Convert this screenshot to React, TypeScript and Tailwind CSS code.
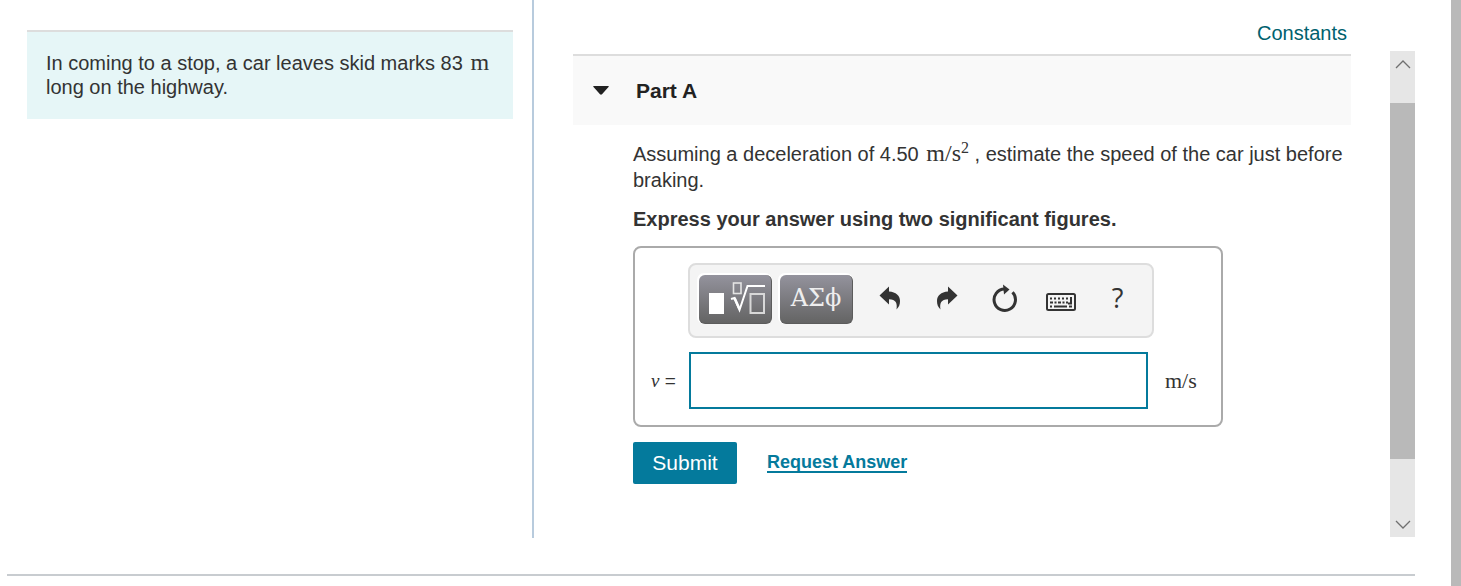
import type { ReactNode } from "react";

function ToolButton({ label, children }: { label: string; children: ReactNode }) {
  return (
    <button
      type="button"
      aria-label={label}
      className="flex h-[46px] w-[57px] items-center justify-center text-[#333333]"
    >
      {children}
    </button>
  );
}

function TemplateButton({ label, children }: { label: string; children: ReactNode }) {
  return (
    <button
      type="button"
      aria-label={label}
      className="flex h-[49px] w-[73px] items-center justify-center rounded-md border-r border-b border-[#5c5c5c] bg-linear-to-b from-[#94939d] to-[#646464] text-white shadow-[-1px_-1px_0_1px_#ffffff]"
    >
      {children}
    </button>
  );
}

function Toolbar() {
  return (
    <div
      role="toolbar"
      aria-label="Equation tools"
      className="flex w-fit items-start gap-2 rounded-lg border-2 border-[#dddddd] bg-[#f4f4f4] pt-[10px] pr-[6px] pb-3 pl-[9px]"
    >
      <TemplateButton label="Templates">
        <svg width="60" height="36" viewBox="0 0 60 36" fill="none">
          <rect x="4" y="12" width="15" height="21" fill="#fff" />
          <rect x="28.500" y="2" width="7.500" height="10.500" stroke="#e4e4e4" strokeWidth="1.600" />
          <path d="M26 18L29.500 17L34.500 29L42.500 5H60" stroke="#fff" strokeWidth="2" />
          <path d="M29.500 17L34.500 28" stroke="#fff" strokeWidth="2.600" />
          <rect x="45.500" y="13" width="13.500" height="19" stroke="#d8d8d8" strokeWidth="2" />
        </svg>
      </TemplateButton>
      <TemplateButton label="Greek symbols">
        <span className="pb-[2px] font-['DejaVu_Serif',serif] text-[24px] leading-8 text-[#eeeeee]">ΑΣϕ</span>
      </TemplateButton>
      <div className="flex">
        <ToolButton label="Undo">
          <svg width="22" height="24" viewBox="0 0 22 24" fill="currentColor">
            <path d="M0.500 9.500L10 0.500V5.500C17 6 21 9.500 21 15C21 18.500 20 21 17.500 23.500C18.500 17 17 13.500 10 13.200V18.500Z" />
          </svg>
        </ToolButton>
        <ToolButton label="Redo">
          <svg width="22" height="24" viewBox="0 0 22 24" fill="currentColor">
            <path d="M21.500 9.500L12 0.500V5.500C5 6 1 9.500 1 15C1 18.500 2 21 4.500 23.500C3.500 17 5 13.500 12 13.200V18.500Z" />
          </svg>
        </ToolButton>
        <ToolButton label="Reset">
          <svg width="26" height="28" viewBox="0 0 26 28" fill="none">
            <path d="M21.500 8.300A10.700 10.700 0 1 1 13.500 5" stroke="currentColor" strokeWidth="3" />
            <path d="M12 0.500L18.500 5.500L13 10.500Z" fill="currentColor" />
          </svg>
        </ToolButton>
        <ToolButton label="Keyboard shortcuts">
          <svg className="mt-2" width="30" height="18" viewBox="0 0 30 18" fill="none" stroke="currentColor">
            <rect x="1" y="1" width="28" height="16" rx="1.500" strokeWidth="2" />
            <path d="M4 5.500H23" strokeWidth="2" strokeDasharray="2 2" />
            <path d="M4 9.500H22" strokeWidth="2" strokeDasharray="3 1.500 2 1.500" />
            <path d="M25 4V10.500H22" strokeWidth="2" />
            <path d="M4 13.500H6M8 13.500H21M23 13.500H26" strokeWidth="2" />
          </svg>
        </ToolButton>
        <ToolButton label="Help">
          <span className="font-['Open_Sans',sans-serif] text-[27px] leading-8">?</span>
        </ToolButton>
      </div>
    </div>
  );
}

function ScrollBar() {
  return (
    <div className="mt-[51px] mb-px flex w-[25px] shrink-0 flex-col bg-[#e6e6e6] text-[#707070]">
      <button type="button" aria-label="Scroll up" className="flex h-[26px] items-center justify-center">
        <svg width="16" height="9" viewBox="0 0 16 9" fill="none" stroke="currentColor" strokeWidth="1.300">
          <path d="M1 8L8 1L15 8" />
        </svg>
      </button>
      <div className="flex flex-1 flex-col">
        <div className="grow-6 basis-0" />
        <div className="grow-82 basis-0 bg-[#b9b9b9]" />
        <div className="grow-12 basis-0" />
      </div>
      <button type="button" aria-label="Scroll down" className="flex h-[26px] items-center justify-center">
        <svg width="16" height="9" viewBox="0 0 16 9" fill="none" stroke="currentColor" strokeWidth="1.300">
          <path d="M1 1L8 8L15 1" />
        </svg>
      </button>
    </div>
  );
}

export default function App() {
  return (
    <div className="flex min-h-screen bg-white font-['Liberation_Sans',Arial,sans-serif] text-[#333333]">
      <div className="flex min-w-0 flex-1 flex-col pr-9 pb-[10px] pl-[7px]">
        <div className="flex flex-1">
          <aside className="w-[527px] shrink-0 border-r-2 border-[#b8cbdd] pt-[30px] pr-[19px] pl-5">
            <p className="border-t-2 border-[#dddddd] bg-[#e6f6f7] px-[19px] pt-[18px] pb-5 text-[20px] leading-6">
              In coming to a stop, a car leaves skid marks 83{" "}
              <span className="pl-[2px] font-['Liberation_Serif',serif] text-[24px] leading-none">m</span> long
              on the highway.
            </p>
          </aside>
          <main className="min-w-0 flex-1 pt-5 pr-[39px] pl-[39px]">
            <div className="flex justify-end pr-1">
              <a href="#constants" className="text-[20px] leading-[26px] text-[#00616e]">
                Constants
              </a>
            </div>
            <section>
              <header className="mt-2 border-t-2 border-[#dddddd] bg-[#f9f9f9]">
                <button type="button" aria-expanded="true" className="flex h-[69px] items-center pl-5 text-[#222222]">
                  <svg width="16" height="9" viewBox="0 0 16 9" fill="currentColor">
                    <path d="M1 0H15Q16.500 0 15.500 1L9 8.300Q8 9.200 7 8.300L0.500 1Q-0.500 0 1 0Z" />
                  </svg>
                  <h2 className="pl-[27px] text-[21px] leading-[26px] font-bold">Part A</h2>
                </button>
              </header>
              <div className="pt-4 pl-[60px]">
                <p className="text-[20px] leading-[26px]">
                  Assuming a deceleration of 4.50{" "}
                  <span className="pl-[2px] font-['Liberation_Serif',serif] text-[24px] leading-none">
                    m/s<sup className="text-[16px]">2</sup>
                  </span>{" "}
                  , estimate the speed of the car just before braking.
                </p>
                <p className="mt-[13px] text-[20px] leading-[26px] font-bold">
                  Express your answer using two significant figures.
                </p>
                <form onSubmit={(e) => e.preventDefault()}>
                  <div className="mt-[14px] w-fit rounded-lg border-2 border-[#aaaaaa] pt-[15px] pr-6 pb-4 pl-4">
                    <div className="pl-[37px]">
                      <Toolbar />
                    </div>
                    <div className="mt-[14px] flex items-center">
                      <label htmlFor="speed" className="w-[38px] text-[19px] leading-6">
                        <i className="font-['Liberation_Serif',serif]">v</i> =
                      </label>
                      <input
                        id="speed"
                        type="text"
                        className="h-[57px] w-[459px] border-2 border-[#047a9c] bg-white px-3 text-[20px] outline-none"
                      />
                      <span className="pl-[17px] font-['Liberation_Serif',serif] text-[22px] leading-6">m/s</span>
                    </div>
                  </div>
                  <div className="mt-[15px] flex items-center">
                    <button
                      type="submit"
                      className="h-[42px] w-[104px] rounded-xs bg-[#047a9c] text-[21px] leading-6 text-white"
                    >
                      Submit
                    </button>
                    <a
                      href="#answer"
                      className="ml-[30px] border-b-2 border-[#047a9c] text-[18px] leading-[18px] font-bold text-[#047a9c]"
                    >
                      Request Answer
                    </a>
                  </div>
                </form>
              </div>
            </section>
          </main>
          <ScrollBar />
        </div>
        <hr className="mt-9 border-t-2 border-[#c8ccd0]" />
      </div>
      <div className="w-[10px] shrink-0 bg-[#b9b9b9]" />
    </div>
  );
}
